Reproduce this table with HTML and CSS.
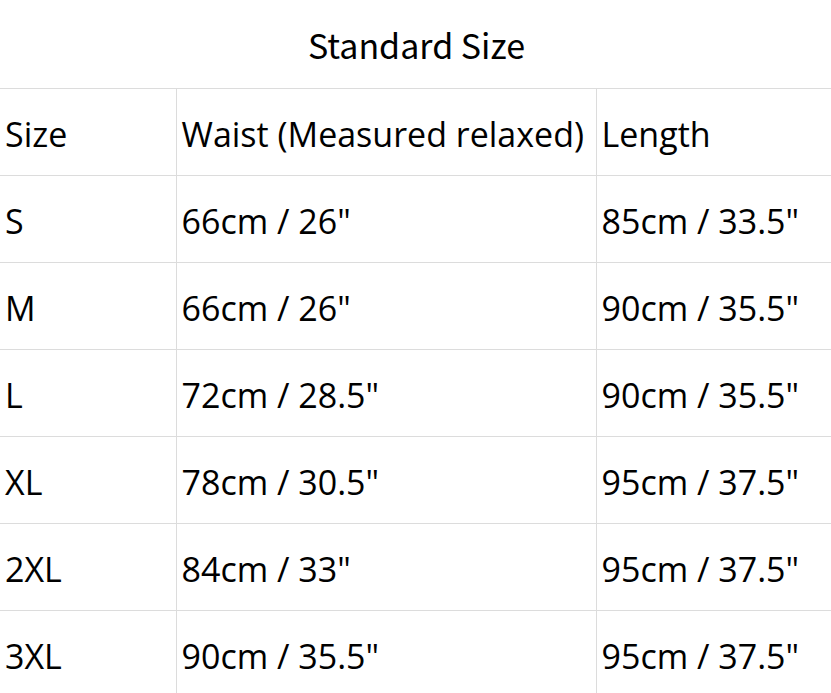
FILE: index.html
```html
<!DOCTYPE html>
<html>
<head>
<meta charset="utf-8">
<link rel="stylesheet" href="styles.css">
</head>
<body>
<div class="page">
  <div class="title">Standard Size</div>
  <table class="size-table">
    <colgroup>
      <col class="c1"><col class="c2"><col class="c3">
    </colgroup>
    <tr><td>Size</td><td>Waist (Measured relaxed)</td><td>Length</td></tr>
    <tr><td>S</td><td>66cm / 26"</td><td>85cm / 33.5"</td></tr>
    <tr><td>M</td><td>66cm / 26"</td><td>90cm / 35.5"</td></tr>
    <tr><td>L</td><td>72cm / 28.5"</td><td>90cm / 35.5"</td></tr>
    <tr><td>XL</td><td>78cm / 30.5"</td><td>95cm / 37.5"</td></tr>
    <tr><td>2XL</td><td>84cm / 33"</td><td>95cm / 37.5"</td></tr>
    <tr><td>3XL</td><td>90cm / 35.5"</td><td>95cm / 37.5"</td></tr>
  </table>
</div>
</body>
</html>
```
FILE: styles.css
```css
html, body {
  margin: 0;
  padding: 0;
  background: #fff;
  overflow: hidden;
}
.page {
  width: 831px;
  height: 693px;
  overflow: hidden;
  color: #000;
}
.title {
  height: 88px;
  display: flex;
  align-items: center;
  justify-content: center;
  font-family: "Noto Sans CJK SC", sans-serif;
  font-size: 34px;
  padding-left: 2px;
}
.size-table {
  border-collapse: collapse;
  width: 860px;
  table-layout: fixed;
  font-family: "Open Sans", sans-serif;
  font-size: 34px;
}
.c1 { width: 176px; }
.c2 { width: 420px; }
.c3 { width: 264px; }
.size-table td {
  border: 1px solid #dcdcdc;
  height: 83px;
  padding: 3px 0 0 5px;
  white-space: nowrap;
  vertical-align: middle;
}
.size-table td:first-child {
  border-left: none;
}
```
